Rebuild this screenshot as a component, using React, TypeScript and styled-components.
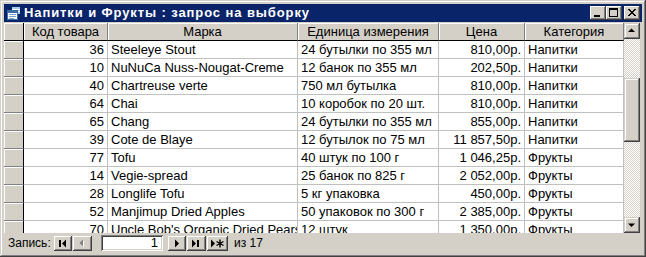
import styled, { createGlobalStyle } from "styled-components";

const GlobalStyle = createGlobalStyle`
  html, body {
    margin: 0;
    padding: 0;
    background: #d4d0c8;
  }
  * {
    box-sizing: border-box;
  }
`;

type Align = "left" | "right" | "center";

interface Column {
  title: string;
  width: number;
  align: Align;
}

const columns: Column[] = [
  { title: "Код товара", width: 84, align: "right" },
  { title: "Марка", width: 190, align: "left" },
  { title: "Единица измерения", width: 141, align: "left" },
  { title: "Цена", width: 86, align: "right" },
  { title: "Категория", width: 99, align: "left" },
];

const rows: string[][] = [
  ["36", "Steeleye Stout", "24 бутылки по 355 мл", "810,00р.", "Напитки"],
  ["10", "NuNuCa Nuss-Nougat-Creme", "12 банок по 355 мл", "202,50р.", "Напитки"],
  ["40", "Chartreuse verte", "750 мл бутылка", "810,00р.", "Напитки"],
  ["64", "Chai", "10 коробок по 20 шт.", "810,00р.", "Напитки"],
  ["65", "Chang", "24 бутылки по 355 мл", "855,00р.", "Напитки"],
  ["39", "Cote de Blaye", "12 бутылок по 75 мл", "11 857,50р.", "Напитки"],
  ["77", "Tofu", "40 штук по 100 г", "1 046,25р.", "Фрукты"],
  ["14", "Vegie-spread", "25 банок по 825 г", "2 052,00р.", "Фрукты"],
  ["28", "Longlife Tofu", "5 кг упаковка", "450,00р.", "Фрукты"],
  ["52", "Manjimup Dried Apples", "50 упаковок по 300 г", "2 385,00р.", "Фрукты"],
  ["70", "Uncle Bob's Organic Dried Pears", "12 штук", "1 350,00р.", "Фрукты"],
];

export default function App() {
  return (
    <>
      <GlobalStyle />
      <Window>
        <TitleBar>
          <TitleIcon />
          <TitleText>Напитки и Фрукты : запрос на выборку</TitleText>
          <CaptionButtons>
            <CaptionButton>
              <svg width="16" height="14" viewBox="0 0 16 14">
                <rect x="4" y="9" width="6" height="2" fill="#000" />
              </svg>
            </CaptionButton>
            <CaptionButton>
              <svg width="16" height="14" viewBox="0 0 16 14">
                <rect x="3.5" y="2.5" width="8" height="8" fill="none" stroke="#000" />
                <rect x="3" y="2" width="9" height="2" fill="#000" />
              </svg>
            </CaptionButton>
            <CaptionButton $gap>
              <svg width="16" height="14" viewBox="0 0 16 14">
                <path d="M4 3 L11 10 M5 3 L12 10 M11 3 L4 10 M12 3 L5 10" stroke="#000" strokeWidth="1" />
              </svg>
            </CaptionButton>
          </CaptionButtons>
        </TitleBar>

        <DataArea>
          <Grid>
            <Row>
              <HeaderSelector />
              {columns.map((c) => (
                <HeaderCell key={c.title} $w={c.width}>
                  {c.title}
                </HeaderCell>
              ))}
            </Row>
            {rows.map((r) => (
              <Row key={r[0]}>
                <Selector />
                {r.map((v, i) => (
                  <Cell key={i} $w={columns[i].width} $align={columns[i].align}>
                    {v}
                  </Cell>
                ))}
              </Row>
            ))}
          </Grid>
          <ScrollBar>
            <ScrollButton>
              <svg width="16" height="16" viewBox="0 0 16 16">
                <path d="M7.5 5 L11 8.5 L4 8.5 Z" fill="#000" transform="translate(0 0.5)" />
              </svg>
            </ScrollButton>
            <TrackTop />
            <Thumb />
            <Track />
            <ScrollButton>
              <svg width="16" height="16" viewBox="0 0 16 16">
                <path d="M4 6.5 L11 6.5 L7.5 10 Z" fill="#000" />
              </svg>
            </ScrollButton>
          </ScrollBar>
        </DataArea>

        <NavBar>
          <NavLabel>Запись:</NavLabel>
          <NavButton $w={18}>
            <svg width="18" height="15" viewBox="0 0 18 15">
              <rect x="5" y="4" width="2" height="7" fill="#000" />
              <path d="M12 3.5 L12 11.5 L8 7.5 Z" fill="#000" />
            </svg>
          </NavButton>
          <NavButton $w={19}>
            <svg width="19" height="15" viewBox="0 0 19 15">
              <path d="M11 4.5 L11 11.5 L7.5 8 Z" fill="#fff" />
              <path d="M10 3.5 L10 10.5 L6.5 7 Z" fill="#808080" />
            </svg>
          </NavButton>
          <RecordInput>1</RecordInput>
          <NavButton $w={18}>
            <svg width="18" height="15" viewBox="0 0 18 15">
              <path d="M7 3.5 L7 11.5 L11 7.5 Z" fill="#000" />
            </svg>
          </NavButton>
          <NavButton $w={19}>
            <svg width="19" height="15" viewBox="0 0 19 15">
              <path d="M5 3.5 L5 11.5 L9 7.5 Z" fill="#000" />
              <rect x="10" y="4" width="2" height="7" fill="#000" />
            </svg>
          </NavButton>
          <NavButton $w={21}>
            <svg width="21" height="15" viewBox="0 0 21 15">
              <path d="M4 3.5 L4 11.5 L8 7.5 Z" fill="#000" />
              <path
                d="M13 3.5 L13 11.5 M9.5 5.5 L16.5 9.5 M16.5 5.5 L9.5 9.5"
                stroke="#000"
                strokeWidth="1.4"
              />
            </svg>
          </NavButton>
          <NavCount>из 17</NavCount>
        </NavBar>
      </Window>
    </>
  );
}

function TitleIcon() {
  return (
    <IconBox>
      <svg width="16" height="16" viewBox="0 0 16 16">
        <rect x="5.5" y="1.5" width="9" height="8" fill="#a6caf0" stroke="#0a246a" />
        <rect x="6" y="4" width="8" height="1" fill="#fff" />
        <rect x="6" y="6" width="8" height="1" fill="#fff" />
        <rect x="1.5" y="5.5" width="10" height="9" fill="#fff" stroke="#3a6ea5" />
        <rect x="2" y="6" width="9" height="2" fill="#3a6ea5" />
        <rect x="3" y="9" width="7" height="1" fill="#7f9fd0" />
        <rect x="3" y="11" width="7" height="1" fill="#7f9fd0" />
        <rect x="3" y="13" width="5" height="1" fill="#7f9fd0" />
      </svg>
    </IconBox>
  );
}

const Window = styled.div`
  width: 646px;
  height: 257px;
  padding: 4px;
  display: flex;
  flex-direction: column;
  background: #d4d0c8;
  box-shadow: inset -1px -1px #404040, inset 1px 1px #d4d0c8,
    inset -2px -2px #808080, inset 2px 2px #ffffff;
  font-family: "Liberation Sans", Arial, sans-serif;
`;

const TitleBar = styled.div`
  height: 18px;
  flex: none;
  display: flex;
  align-items: center;
  padding: 0 2px 0 2px;
  margin-bottom: 1px;
  background: #0a246a;
`;

const IconBox = styled.div`
  width: 16px;
  height: 16px;
  flex: none;
  display: flex;
`;

const TitleText = styled.div`
  flex: 1;
  margin-left: 2px;
  color: #ffffff;
  font-weight: 700;
  font-size: 13px;
  letter-spacing: 0.9px;
  line-height: 18px;
  white-space: nowrap;
  overflow: hidden;
`;

const CaptionButtons = styled.div`
  display: flex;
  align-items: center;
`;

const CaptionButton = styled.div<{ $gap?: boolean }>`
  width: 16px;
  height: 14px;
  margin-left: ${(p) => (p.$gap ? "2px" : "0")};
  display: flex;
  background: #d4d0c8;
  box-shadow: inset -1px -1px #404040, inset 1px 1px #ffffff,
    inset -2px -2px #808080;
`;

const DataArea = styled.div`
  height: 210px;
  flex: none;
  display: flex;
  padding-right: 2px;
`;

const Grid = styled.div`
  width: 620px;
  height: 210px;
  flex: none;
  overflow: hidden;
  background: #ffffff;
`;

const Row = styled.div`
  display: flex;
  height: 18px;
`;

const Selector = styled.div`
  width: 20px;
  flex: none;
  background: #d4d0c8;
  border-right: 1px solid #000000;
  border-bottom: 1px solid #808080;
  box-shadow: inset 1px 1px #ffffff;
`;

const HeaderSelector = styled(Selector)`
  border-bottom: 1px solid #000000;
`;

const HeaderCell = styled.div<{ $w: number }>`
  width: ${(p) => p.$w}px;
  flex: none;
  background: #d4d0c8;
  border-right: 1px solid #808080;
  border-bottom: 1px solid #000000;
  box-shadow: inset 1px 1px #ffffff;
  color: #000000;
  font-size: 13px;
  line-height: 17px;
  text-align: center;
  white-space: nowrap;
  overflow: hidden;
`;

const Cell = styled.div<{ $w: number; $align: Align }>`
  width: ${(p) => p.$w}px;
  flex: none;
  padding: 0 3px;
  border-right: 1px solid #c0c0c0;
  border-bottom: 1px solid #c0c0c0;
  color: #000000;
  font-size: 13px;
  line-height: 17px;
  text-align: ${(p) => p.$align};
  white-space: nowrap;
  overflow: hidden;
`;

const ScrollBar = styled.div`
  width: 16px;
  flex: none;
  display: flex;
  flex-direction: column;
`;

const raised = `
  background: #d4d0c8;
  box-shadow: inset -1px -1px #404040, inset 1px 1px #d4d0c8,
    inset -2px -2px #808080, inset 2px 2px #ffffff;
`;

const ScrollButton = styled.div`
  width: 16px;
  height: 16px;
  flex: none;
  display: flex;
  ${raised}
`;

const checker = `
  background: repeating-conic-gradient(#ffffff 0 25%, #d4d0c8 0 50%) 0 0 / 2px 2px;
`;

const TrackTop = styled.div`
  height: 39px;
  flex: none;
  ${checker}
`;

const Track = styled.div`
  flex: 1;
  ${checker}
`;

const Thumb = styled.div`
  height: 64px;
  flex: none;
  ${raised}
`;

const NavBar = styled.div`
  height: 20px;
  flex: none;
  display: flex;
  align-items: center;
  padding-left: 2px;
  font-size: 12px;
  color: #000000;
`;

const NavLabel = styled.span`
  width: 48px;
  flex: none;
  padding-left: 2px;
`;

const NavButton = styled.div<{ $w: number }>`
  width: ${(p) => p.$w}px;
  height: 15px;
  flex: none;
  display: flex;
  margin-right: 1px;
  background: #d4d0c8;
  box-shadow: inset -1px -1px #404040, inset 1px 1px #ffffff,
    inset -2px -2px #808080;
`;

const RecordInput = styled.div`
  width: 62px;
  height: 16px;
  flex: none;
  margin: 0 5px 0 8px;
  padding-right: 5px;
  background: #ffffff;
  box-shadow: inset 1px 1px #808080, inset -1px -1px #ffffff,
    inset 2px 2px #404040, inset -2px -2px #d4d0c8;
  font-size: 13px;
  line-height: 16px;
  text-align: right;
`;

const NavCount = styled.span`
  margin-left: 5px;
`;
